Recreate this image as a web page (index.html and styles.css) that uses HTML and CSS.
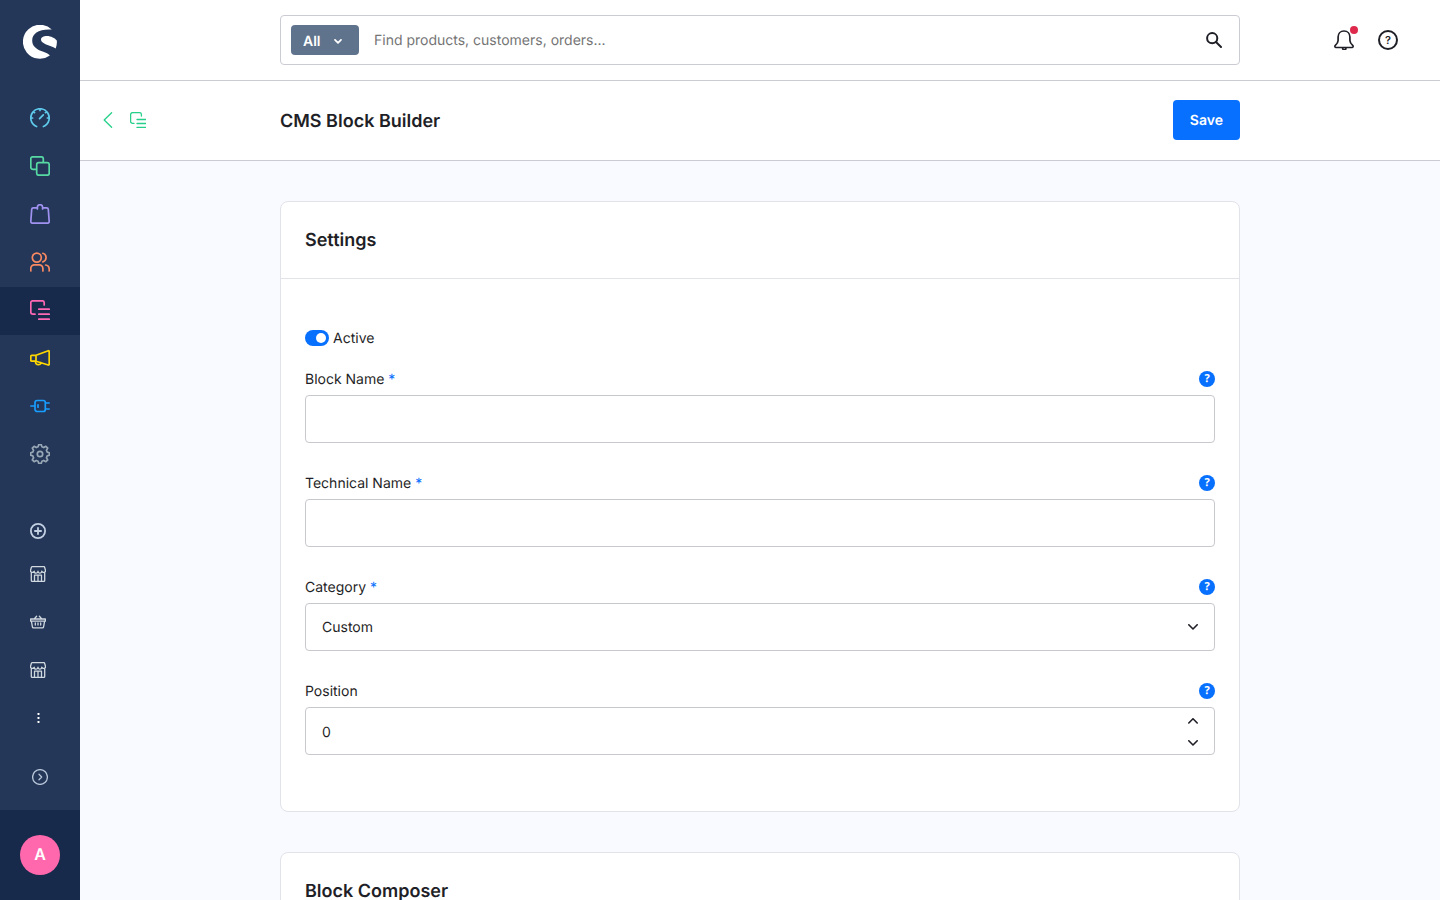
FILE: index.html
```
<!DOCTYPE html>
<html lang="en">

<head>
  <meta charset="UTF-8">
  <meta name="viewport" content="width=device-width, initial-scale=1.0">
  <title>CMS Block Builder</title>
  <link rel="stylesheet" href="styles.css">
</head>

<body>
  <div class="app">
    <aside class="sidebar">
      <a href="#" class="logo" aria-label="Home">
        <svg width="34" height="34" viewBox="0 0 34 34">
          <path d="M28.8 4.6A17 17 0 1 0 26.9 30.5C26.2 29 22.5 27.6 19 26.2C13 23.8 9.2 21 9.2 15.4C9.2 8.5 16 3.8 28.8 4.6Z" />
          <path d="M24 11C28 11 32 13.2 33.8 15.6C34.1 18.3 33.7 20.8 32.7 23.4C30 21.5 26 20.8 22.5 19.2C19.5 17.9 18 16.6 18 14.6C18 12.2 20.5 11 24 11Z" />
        </svg>
      </a>

      <nav class="menu">
        <a href="#" class="menu-item dashboard" aria-label="Dashboard">
          <svg class="icon" viewBox="0 0 20 20">
            <path d="M6.6 18.5A9.2 9.2 0 1 1 13.4 18.5M9.6 10.6L13.3 6.8M10 .8V2.4M.8 10H2.6M17.4 10H19.2M3.5 3.7L4.5 4.7M16.5 3.7L15.5 4.7" />
          </svg>
        </a>
        <a href="#" class="menu-item catalogues" aria-label="Catalogues">
          <svg class="icon" viewBox="0 0 20 20">
            <path d="M6 13.3H2.8a2 2 0 0 1-2-2V2.8a2 2 0 0 1 2-2H11.3a2 2 0 0 1 2 2V6" />
            <rect x="6.7" y="6.7" width="12.5" height="12.5" rx="2" />
          </svg>
        </a>
        <a href="#" class="menu-item orders" aria-label="Orders">
          <svg class="icon" viewBox="0 0 20 20">
            <path d="M5 3.8H3.4a1.7 1.7 0 0 0-1.7 1.6L.8 17.4a1.7 1.7 0 0 0 1.7 1.8H17.5a1.7 1.7 0 0 0 1.7-1.8L18.3 5.4a1.7 1.7 0 0 0-1.7-1.6H15M7.4 5V3.3a2.6 2.6 0 0 1 5.2 0V5M5 3.8H7.4M12.6 3.8H15" />
          </svg>
        </a>
        <a href="#" class="menu-item customers" aria-label="Customers">
          <svg class="icon" viewBox="0 0 20 20">
            <circle cx="6.8" cy="5.6" r="4.5" />
            <path d="M.8 18.9V16.4a3.6 3.6 0 0 1 3.6-3.6H9.3a3.6 3.6 0 0 1 3.6 3.6V18.9M12.9 1.3a4.5 4.5 0 0 1 0 8.6M15.6 13a4.2 4.2 0 0 1 3.6 4V18.9" />
          </svg>
        </a>
        <a href="#" class="menu-item content active" aria-label="Content" aria-current="page">
          <svg class="icon" viewBox="0 0 20 20">
            <path d="M5 14.2H2.8a2 2 0 0 1-2-2V2.8a2 2 0 0 1 2-2H12.2a2 2 0 0 1 2 2V5M8.8 9.2H19.3M8.8 14.2H19.3M8.8 19.2H19.3" />
          </svg>
        </a>
        <a href="#" class="menu-item marketing" aria-label="Marketing">
          <svg class="icon" viewBox="0 0 20 20">
            <path d="M6 7.3L18.3 2.7a.7.7 0 0 1 .9.7V16.4a.7.7 0 0 1-.9.6L6 13.2M1.7 7.3H6V13.2H1.7a.9.9 0 0 1-.9-.9V8.2a.9.9 0 0 1 .9-.9ZM5.6 13.2C5.2 15.6 6.8 16.7 8.3 16.7C9.8 16.7 10.8 16 10.9 14.7" />
          </svg>
        </a>
        <a href="#" class="menu-item extensions" aria-label="Extensions">
          <svg class="icon" viewBox="0 0 20 20">
            <path d="M.8 10H5M7.2 4.5H13.3a2 2 0 0 1 2 2V13.5a2 2 0 0 1-2 2H7.2a2.2 2.2 0 0 1-2.2-2.2V6.7a2.2 2.2 0 0 1 2.2-2.2ZM15.4 7H19.2M15.4 13H19.2M8 8.8V11.2" />
          </svg>
        </a>
        <a href="#" class="menu-item settings" aria-label="Settings">
          <svg class="icon" viewBox="2 2 20 20">
            <path d="M10.1 4.8L10.7 2.7H13.3L13.9 4.8L15.75 5.57L17.87 4.29L19.71 6.13L18.43 8.25L19.2 10.1L21.3 10.7V13.3L19.2 13.9L18.43 15.75L19.71 17.87L17.87 19.71L15.75 18.43L13.9 19.2L13.3 21.3H10.7L10.1 19.2L8.25 18.43L6.13 19.71L4.29 17.87L5.57 15.75L4.8 13.9L2.7 13.3V10.7L4.8 10.1L5.57 8.25L4.29 6.13L6.13 4.29L8.25 5.57Z" />
            <circle cx="12" cy="12" r="2.7" />
          </svg>
        </a>
      </nav>

      <nav class="channels">
        <button type="button" class="add-channel" aria-label="Add sales channel">
          <svg class="icon-small" viewBox="0 0 16 16">
            <circle cx="8" cy="8" r="7.1" />
            <path d="M8 4.9V11.1M4.9 8H11.1" />
          </svg>
        </button>
        <a href="#" class="channel" aria-label="Storefront">
          <svg class="icon-small" viewBox="0 0 16 16">
            <path d="M1.3 6.8V14.4a1 1 0 0 0 1 1H13.7a1 1 0 0 0 1-1V6.8M2.3.6H13.7a1 1 0 0 1 .9.7L15.4 4A1.9 1.9 0 0 1 11.8 5.2A1.9 1.9 0 0 1 8 5.2A1.9 1.9 0 0 1 4.2 5.2A1.9 1.9 0 0 1 .6 4L1.4 1.3A1 1 0 0 1 2.3.6ZM4.5 15.4V9.2H11.5V15.4M8 9.2V15.4" />
          </svg>
        </a>
        <a href="#" class="channel" aria-label="Shop">
          <svg class="icon-small" viewBox="0 0 16 16">
            <path d="M.6 5H15.4V7.2H14.6L13.6 12.8a1.2 1.2 0 0 1-1.2 1H3.6a1.2 1.2 0 0 1-1.2-1L1.4 7.2H.6ZM1.4 7.2H14.6M4.2 5L6.6 2.3M11.8 5L9.4 2.3M5.3 9V11M8 9V11M10.7 9V11" />
          </svg>
        </a>
        <a href="#" class="channel" aria-label="Storefront 2">
          <svg class="icon-small" viewBox="0 0 16 16">
            <path d="M1.3 6.8V14.4a1 1 0 0 0 1 1H13.7a1 1 0 0 0 1-1V6.8M2.3.6H13.7a1 1 0 0 1 .9.7L15.4 4A1.9 1.9 0 0 1 11.8 5.2A1.9 1.9 0 0 1 8 5.2A1.9 1.9 0 0 1 4.2 5.2A1.9 1.9 0 0 1 .6 4L1.4 1.3A1 1 0 0 1 2.3.6ZM4.5 15.4V9.2H11.5V15.4M8 9.2V15.4" />
          </svg>
        </a>
        <button type="button" class="channel" aria-label="More">
          <svg class="icon-small dots" viewBox="0 0 16 16">
            <rect x="7.5" y="3" width="2" height="2" rx=".4" />
            <rect x="7.5" y="7" width="2" height="2" rx=".4" />
            <rect x="7.5" y="11" width="2" height="2" rx=".4" />
          </svg>
        </button>
      </nav>

      <button type="button" class="expand" aria-label="Expand menu">
        <svg class="icon-small" viewBox="0 0 16 16">
          <circle cx="8" cy="8" r="7.4" />
          <path d="M7 5.3L9.7 8L7 10.7" />
        </svg>
      </button>

      <div class="user">
        <button type="button" class="avatar">A</button>
      </div>
    </aside>

    <div class="page">
      <header class="topbar">
        <form class="search">
          <button type="button" class="search-type">
            All
            <svg width="8" height="5" viewBox="0 0 8 5"><path d="M1 .8L4 3.8L7 .8" /></svg>
          </button>
          <input type="text" class="search-input" placeholder="Find products, customers, orders..." aria-label="Search">
          <button type="submit" class="search-submit" aria-label="Search">
            <svg width="16" height="16" viewBox="0 0 16 16">
              <circle cx="6.2" cy="6.2" r="5.1" />
              <path d="M10 10L15 15" />
            </svg>
          </button>
        </form>
        <div class="actions">
          <button type="button" class="notifications" aria-label="Notifications">
            <svg width="20" height="20" viewBox="0 0 20 20">
              <path d="M10 1C6.4 1 4.1 3.6 4.1 7V10.4C4.1 12.6 3.2 13.5 1.3 15.4A1.2 1.2 0 0 0 1.8 17.5H18.2A1.2 1.2 0 0 0 18.7 15.4C16.8 13.5 15.9 12.6 15.9 10.4V7C15.9 3.6 13.6 1 10 1ZM8.6 18A1.7 1.7 0 0 0 12 18" />
            </svg>
            <span class="badge"></span>
          </button>
          <button type="button" class="help-center" aria-label="Help">?</button>
        </div>
      </header>

      <div class="smartbar">
        <div class="smartbar-back">
          <a href="#" aria-label="Back">
            <svg width="10" height="16" viewBox="0 0 10 16"><path d="M8.6.8L1.2 8L8.6 15.2" /></svg>
          </a>
          <svg width="16" height="16" viewBox="0 0 16 16">
            <path d="M4 11.4H2.6a2 2 0 0 1-2-2V2.6a2 2 0 0 1 2-2H9.4a2 2 0 0 1 2 2V4M7 7.5H16M7 11.5H16M7 15.4H16" />
          </svg>
        </div>
        <div class="smartbar-main">
          <h1>CMS Block Builder</h1>
          <button type="submit" form="block-form" class="save">Save</button>
        </div>
      </div>

      <main class="content-area">
        <form class="card" id="block-form">
          <h2 class="card-title">Settings</h2>
          <div class="card-body">
            <label class="switch">
              <input type="checkbox" checked>
              <span>Active</span>
            </label>

            <div class="field">
              <div class="field-head">
                <label for="blockName">Block Name <span class="required">*</span></label>
                <button type="button" class="help" aria-label="Help">?</button>
              </div>
              <div class="box">
                <input type="text" id="blockName">
              </div>
            </div>

            <div class="field">
              <div class="field-head">
                <label for="technicalName">Technical Name <span class="required">*</span></label>
                <button type="button" class="help" aria-label="Help">?</button>
              </div>
              <div class="box">
                <input type="text" id="technicalName">
              </div>
            </div>

            <div class="field">
              <div class="field-head">
                <label for="category">Category <span class="required">*</span></label>
                <button type="button" class="help" aria-label="Help">?</button>
              </div>
              <div class="box">
                <select id="category">
                  <option>Custom</option>
                </select>
                <svg class="chevron select-arrow" viewBox="0 0 10 6"><path d="M.8 .8L5 5L9.2 .8" /></svg>
              </div>
            </div>

            <div class="field">
              <div class="field-head">
                <label for="position">Position</label>
                <button type="button" class="help" aria-label="Help">?</button>
              </div>
              <div class="box">
                <input type="number" id="position" value="0">
                <div class="stepper">
                  <button type="button" aria-label="Increase">
                    <svg class="chevron" viewBox="0 0 10 6"><path d="M.8 5L5 .8L9.2 5" /></svg>
                  </button>
                  <button type="button" aria-label="Decrease">
                    <svg class="chevron" viewBox="0 0 10 6"><path d="M.8 .8L5 5L9.2 .8" /></svg>
                  </button>
                </div>
              </div>
            </div>
          </div>
        </form>

        <section class="card">
          <h2 class="card-title">Block Composer</h2>
          <div class="card-body"></div>
        </section>
      </main>
    </div>
  </div>
</body>

</html>
```

FILE: styles.css
```
* {
  box-sizing: border-box;
}

body {
  margin: 0;
  font-family: Inter, "Liberation Sans", sans-serif;
  font-size: 14px;
  color: #1f1f27;
  background-color: #f9faff;
  text-rendering: geometricPrecision;
}

button,
input,
select {
  font: inherit;
  color: inherit;
  text-rendering: inherit;
}

button {
  padding: 0;
  border: 0;
  background: none;
  cursor: pointer;
}

svg {
  display: block;
  flex-shrink: 0;
  fill: none;
  stroke: currentColor;
  stroke-linecap: round;
  stroke-linejoin: round;
}

.app {
  display: flex;
  height: 100vh;
}

/* sidebar */
.sidebar {
  display: flex;
  flex-direction: column;
  flex-shrink: 0;
  width: 80px;
  background-color: #243758;
}

.logo {
  display: flex;
  justify-content: center;
  padding: 25px 0 36px;
}

.logo svg {
  fill: #fff;
  stroke: none;
}

.menu-item {
  display: flex;
  align-items: center;
  justify-content: center;
  height: 48px;
  padding-bottom: 2px;
}

.active {
  background-color: #182a4b;
}

.icon {
  width: 20px;
  height: 20px;
  stroke-width: 1.7;
}

.dashboard { color: #5ec9eb; }
.catalogues { color: #57d9a3; }
.orders { color: #a092f0; }
.customers { color: #f88962; }
.content { color: #ff68b4; }
.marketing { color: #ffd700; }
.extensions { color: #189eff; }
.settings { color: #98a7b5; }

.channels {
  display: flex;
  flex-direction: column;
  margin-top: 32px;
  color: #d1d9e0;
}

.add-channel,
.channel {
  display: flex;
  align-items: center;
  padding-left: 30px;
  height: 48px;
  color: inherit;
}

.channel {
  padding-bottom: 2px;
}

.add-channel {
  height: 40px;
  color: #c3d0e3;
}

.add-channel svg {
  stroke-width: 1.8;
}

.icon-small {
  width: 16px;
  height: 16px;
  stroke-width: 1.3;
}

.dots {
  fill: #fff;
  stroke: none;
}

.expand {
  display: flex;
  align-items: center;
  justify-content: center;
  height: 66px;
  margin-top: auto;
  color: #b8c6d9;
}

.user {
  display: flex;
  align-items: center;
  justify-content: center;
  height: 90px;
  background-color: #182a4b;
}

.avatar {
  width: 40px;
  height: 40px;
  padding-bottom: 2px;
  border-radius: 50%;
  background-color: #ff68ac;
  color: #fff;
  font-size: 16px;
  font-weight: 600;
}

/* header */
.page {
  display: flex;
  flex-direction: column;
  flex: 1;
  min-width: 0;
}

.topbar,
.smartbar {
  display: grid;
  grid-template-columns: minmax(80px, 1fr) minmax(0, 960px) minmax(120px, 1fr);
  align-items: center;
  flex-shrink: 0;
  background-color: #fff;
  border-bottom: 1px solid #cbcbd4;
}

.topbar {
  padding: 15px 0;
}

.search {
  grid-column: 2;
  display: flex;
  align-items: center;
  height: 50px;
  padding: 0 17px 0 10px;
  border: 1px solid #cbcbd4;
  border-radius: 4px;
}

.search-type {
  display: flex;
  align-items: center;
  justify-content: space-between;
  width: 68px;
  height: 30px;
  padding: 2px 17px 0 12px;
  border-radius: 4px;
  background-color: #5f738c;
  color: #fff;
  font-weight: 600;
}

.search-type svg {
  stroke-width: 1.7;
}

.search-input {
  flex: 1;
  min-width: 0;
  height: 48px;
  padding: 0 15px;
  border: 0;
  outline: none;
  background: none;
}

.search-input::placeholder {
  color: #757575;
}

.search-submit svg {
  stroke-width: 2;
}

.actions {
  display: flex;
  justify-content: flex-end;
  gap: 24px;
  padding-right: 42px;
}

.notifications {
  position: relative;
}

.notifications svg {
  stroke-width: 1.7;
}

.badge {
  position: absolute;
  top: -4px;
  right: -4px;
  width: 8px;
  height: 8px;
  border-radius: 50%;
  background-color: #de294c;
}

.help-center {
  width: 20px;
  height: 20px;
  border: 2px solid #1f1f27;
  border-radius: 50%;
  font-size: 11px;
  font-weight: 600;
  line-height: 16px;
}

.smartbar {
  padding: 19px 0 20px;
}

.smartbar-back {
  display: flex;
  align-items: center;
  gap: 17px;
  padding-left: 23px;
  color: #26d08a;
}

.smartbar-back a {
  color: inherit;
}

.smartbar-back svg {
  stroke-width: 1.3;
}

.smartbar-main {
  display: flex;
  align-items: center;
  justify-content: space-between;
}

h1,
h2 {
  margin: 0;
  font-size: 18px;
  font-weight: 600;
  line-height: 28px;
}

h1 {
  padding-top: 3px;
}

.save {
  height: 40px;
  padding: 0 17px;
  border-radius: 4px;
  background-color: #0870ff;
  color: #fff;
  font-weight: 600;
}

/* cards */
.content-area {
  flex: 1;
  padding: 40px 20px;
  overflow-y: auto;
  scrollbar-width: none;
}

.card {
  max-width: 960px;
  margin: 0 auto 40px;
  border: 1px solid #e2e2e9;
  border-radius: 8px;
  background-color: #fff;
}

.card-title {
  padding: 25px 24px 23px;
  border-bottom: 1px solid #e2e2e9;
}

.card-body {
  padding: 48px 24px 24px;
}

.switch {
  display: flex;
  align-items: center;
  gap: 4px;
  height: 22px;
  margin-bottom: 22px;
}

.switch input {
  display: flex;
  align-items: center;
  justify-content: flex-end;
  appearance: none;
  width: 24px;
  height: 16px;
  margin: 0;
  padding: 3px;
  border-radius: 8px;
  background-color: #0870ff;
}

.switch input::before {
  content: "";
  width: 10px;
  height: 10px;
  border-radius: 50%;
  background-color: #fff;
}

.switch input:not(:checked) {
  justify-content: flex-start;
  background-color: #c2c2cc;
}

.field {
  margin-bottom: 32px;
}

.field-head {
  display: flex;
  align-items: flex-start;
  justify-content: space-between;
  height: 16px;
  margin-bottom: 8px;
  line-height: 18px;
}

.required {
  color: #0870ff;
}

.help {
  width: 16px;
  height: 16px;
  border-radius: 50%;
  background-color: #0870ff;
  color: #fff;
  font-family: "Noto Sans", sans-serif;
  font-size: 11px;
  font-weight: 700;
  line-height: 16px;
}

.box {
  display: flex;
  position: relative;
  height: 48px;
  border: 1px solid #c8c8cf;
  border-radius: 4px;
  background-color: #fff;
}

.box input,
.box select {
  appearance: none;
  flex: 1;
  min-width: 0;
  padding: 0 16px;
  border: 0;
  outline: none;
  background: none;
}

.box input[type="number"] {
  appearance: textfield;
  padding-top: 2px;
}

.chevron {
  width: 10px;
  height: 6px;
  stroke-width: 1.6;
}

.select-arrow {
  position: absolute;
  top: 20px;
  right: 16px;
  pointer-events: none;
}

.stepper {
  display: flex;
  flex-direction: column;
  justify-content: center;
  padding: 2px 16px 0 0;
}

.stepper button {
  display: flex;
  align-items: center;
  height: 22px;
}
```
